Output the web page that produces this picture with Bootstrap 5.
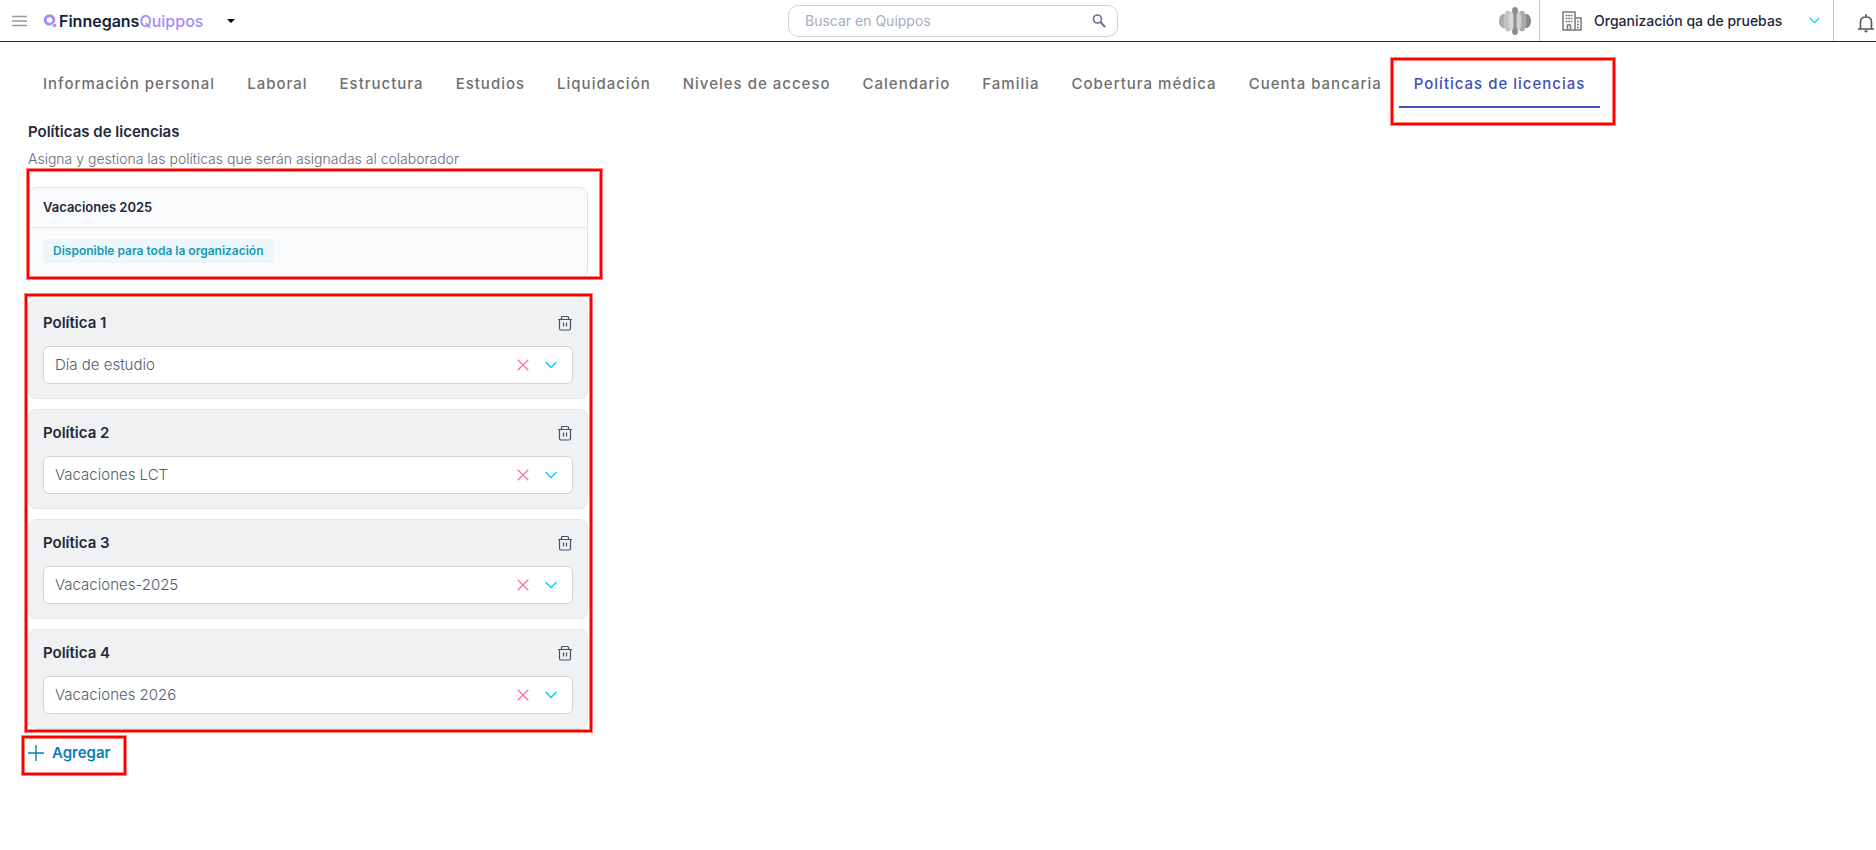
<!DOCTYPE html>
<html lang="es">
<head>
<meta charset="utf-8">
<meta name="viewport" content="width=device-width, initial-scale=1">
<title>Finnegans Quippos</title>
<link href="https://cdn.jsdelivr.net/npm/bootstrap@5.3.0/dist/css/bootstrap.min.css" rel="stylesheet">
<style>
body{font-family:Inter,"Open Sans",sans-serif;font-size:14px;line-height:20px;color:#1e293b;background:#fff;overflow-x:hidden}
svg{display:block;flex:none}
.plain{border:0;background:none;padding:0;color:inherit}
.topbar{height:42px;border-bottom:1px solid #1e2430}
.side{flex:1 1 0}
.brand{font:600 16px/20px Inter,sans-serif;color:#14203f;text-decoration:none}
.brand span{font-weight:500;color:#a98bf5}
.searchbox{width:330px;height:32px;margin-left:30px;border:1px solid #cdd2e0;border-radius:10px;padding:0 11px 0 16px}
.searchbox input,.picker select{border:0;padding:0;background:none;box-shadow:none!important;min-width:0}
.searchbox input{font-size:14px;line-height:20px;color:#475569}
.searchbox input::placeholder{color:#a3aec2}
.org{border:solid #c8c8c8;border-width:0 1px;width:295px;padding:0 13px 0 22px;color:#1e293b}
.org span{font-size:14px;font-weight:500}
.tabs{padding:24px 28px 0;gap:2px}
.tabs a{position:relative;white-space:nowrap;padding:8px 15px 12px;line-height:20px;font-size:15px;font-weight:500;letter-spacing:1px;color:#707070;text-decoration:none;border-bottom:2px solid transparent}
.tabs a.active{color:#3f51b5;border-color:#3f51b5}
.main{max-width:616px;padding:14px 28px}
h1{font-size:15px;line-height:20px;font-weight:600;margin:0 0 7px}
.intro{font-size:14px;line-height:20px;font-weight:300;color:#626a76;margin-bottom:18px}
.mark-box{position:absolute;border:2px solid red;box-shadow:0 0 0 1px #ff8080,inset 0 0 0 1px #ff8080;pointer-events:none}
.m-tab{inset:-8px -15px -19px -8px}
.m-default{inset:-19px -15px -2px -2px}
.m-list{inset:-5px -4px -3px -3px}
.m-add{inset:-7px -15px -12px -6px}
.default-card{border:1px solid #e1e3e6;border-radius:8px;background:#fafbfd;margin-bottom:21px}
.default-card h2{font-size:13px;line-height:20px;font-weight:600;margin:0;padding:9px 14px 10px;border-bottom:1px solid #e1e3e6}
.default-card div{padding:11px 14px 14px}
.tag{display:inline-block;background:#edf6f8;color:#189ab8;border-radius:4px;font-size:12px;font-weight:600;line-height:24px;padding:0 10px;vertical-align:top}
.policies{gap:10px}
.policy{border:1px solid #e4e6ea;border-radius:8px;background:#f0f1f3;padding:13px 14px 14px}
.policy-head{margin-bottom:13px}
.policy label{font-size:15px;line-height:20px;font-weight:600}
.picker{height:38px;border:1px solid #ced4da;border-radius:6px;background:#fff;padding:0 15px 0 11px}
.picker select{font-size:15px;line-height:20px;color:#565c66;font-weight:300}
.add{color:#0b7dbb;font-size:15px;font-weight:600;line-height:20px;margin-top:14px}
</style>
</head>
<body>
<svg class="d-none" aria-hidden="true">
<symbol id="trash" viewBox="0 0 16 16"><path d="M1 4.500h14M4.500 4V2.500q0-1 1-1h5q1 0 1 1V4M2.500 5v8.500q0 1.500 1.500 1.500h8q1.500 0 1.500-1.500V5M6.500 7.500v4M9.500 7.500v4" fill="none" stroke="#475069" stroke-width="1.200"/></symbol>
<symbol id="cross" viewBox="0 0 12 12"><path d="M.7.7l10.600 10.600M11.300.7L.7 11.300" fill="none" stroke="#fb7196" stroke-width="1.300"/></symbol>
<symbol id="chev" viewBox="0 0 12 8"><path d="M.5 1L6 6.500 11.500 1" fill="none" stroke="#12cbf8" stroke-width="1.500"/></symbol>
</svg>
<header class="topbar d-flex align-items-center">
<div class="side d-flex align-items-center">
<button class="plain ms-2 ps-1" aria-label="Menú"><svg width="15" height="12" viewBox="0 0 15 12"><path d="M0 1.500h15M0 6h15M0 10.500h15" stroke="#999" stroke-width="1.500"/></svg></button>
<a class="brand d-flex align-items-center ms-3" href="#"><svg width="16" height="16" viewBox="0 0 16 16"><circle cx="6.500" cy="7" r="4.300" fill="none" stroke="#a98bf5" stroke-width="3"/><circle cx="11.500" cy="12.500" r="2.200" fill="#a98bf5" stroke="#fff" stroke-width=".8"/></svg>Finnegans<span>Quippos</span></a>
<button class="plain ms-4" aria-label="Productos"><svg width="8" height="4" viewBox="0 0 8 4"><path d="M0 0h8L4 4z"/></svg></button>
</div>
<div class="searchbox d-flex align-items-center"><input class="form-control" type="search" placeholder="Buscar en Quippos" aria-label="Buscar en Quippos"><svg width="14" height="14" viewBox="0 0 14 14" fill="none" stroke="#65718b"><circle cx="5.500" cy="5" r="4" stroke-width="1.600"/><path d="M8.500 8l4.500 5" stroke-width="2"/></svg></div>
<div class="side d-flex align-items-center justify-content-end align-self-stretch">
<svg class="me-2" width="32" height="28" viewBox="0 0 32 28"><ellipse cx="4.500" cy="14" rx="4.500" ry="7" fill="#aaa"/><ellipse cx="27.500" cy="14" rx="4.500" ry="7" fill="#888"/><ellipse cx="9" cy="14" rx="4.500" ry="10.500" fill="#c2c2c2"/><ellipse cx="23" cy="14" rx="4.500" ry="10.500" fill="#aaa"/><ellipse cx="12.500" cy="14" rx="3" ry="10" fill="#d8d8d8"/><ellipse cx="19.500" cy="14" rx="3" ry="10" fill="#d0d0d0"/><path d="M16 0q3 0 3 4l-1.500 4v12l1.500 4q0 4-3 4t-3-4l1.500-4V8L13 4q0-4 3-4" fill="#8d8d8d"/></svg>
<button class="plain org d-flex align-items-center align-self-stretch"><svg width="20" height="20" viewBox="0 0 20 20" fill="none" stroke="#777" stroke-width="1.500"><path d="M1 19V1h12v18zM13 7h6v12H1M5.500 19v-5h3v5"/><path d="M3.500 4.500h7M3.500 7.500h7M3.500 10.500h7M15 10.500h2M15 13.500h2M15 16.500h2" stroke-dasharray="2 .7"/></svg><span class="ms-2 ps-1 me-auto">Organización qa de pruebas</span><svg width="11" height="7"><use href="#chev"/></svg></button>
<button class="plain ms-4" aria-label="Notificaciones"><svg class="mt-1" width="18" height="20" viewBox="0 0 18 20"><path d="M0 16h16M2.500 15.500V9q0-5 5.500-5t5.500 5v6.500M8 1v3" fill="none" stroke="#555" stroke-width="1.600"/><path d="M6 17.500h4q-.5 2-2 2t-2-2" fill="#555"/></svg></button>
</div>
</header>
<nav class="tabs d-flex" aria-label="Secciones">
<a href="#">Información personal</a><a href="#">Laboral</a><a href="#">Estructura</a><a href="#">Estudios</a><a href="#">Liquidación</a><a href="#">Niveles de acceso</a><a href="#">Calendario</a><a href="#">Familia</a><a href="#">Cobertura médica</a><a href="#">Cuenta bancaria</a><a class="active" href="#" aria-current="page">Políticas de licencias<i class="mark-box m-tab"></i></a>
</nav>
<main class="main">
<h1>Políticas de licencias</h1>
<p class="intro">Asigna y gestiona las políticas que serán asignadas al colaborador</p>
<section class="default-card position-relative"><h2>Vacaciones 2025</h2><div><span class="tag">Disponible para toda la organización</span></div><i class="mark-box m-default"></i></section>
<section class="position-relative d-grid policies">
<div class="policy"><div class="policy-head d-flex justify-content-between align-items-center"><label for="p1">Política 1</label><button class="plain" aria-label="Eliminar"><svg width="16" height="16"><use href="#trash"/></svg></button></div><div class="picker d-flex align-items-center"><select id="p1" class="form-select"><option>Día de estudio</option></select><button class="plain" aria-label="Quitar"><svg width="12" height="12"><use href="#cross"/></svg></button><svg class="ms-3" width="12" height="8"><use href="#chev"/></svg></div></div>
<div class="policy"><div class="policy-head d-flex justify-content-between align-items-center"><label for="p2">Política 2</label><button class="plain" aria-label="Eliminar"><svg width="16" height="16"><use href="#trash"/></svg></button></div><div class="picker d-flex align-items-center"><select id="p2" class="form-select"><option>Vacaciones LCT</option></select><button class="plain" aria-label="Quitar"><svg width="12" height="12"><use href="#cross"/></svg></button><svg class="ms-3" width="12" height="8"><use href="#chev"/></svg></div></div>
<div class="policy"><div class="policy-head d-flex justify-content-between align-items-center"><label for="p3">Política 3</label><button class="plain" aria-label="Eliminar"><svg width="16" height="16"><use href="#trash"/></svg></button></div><div class="picker d-flex align-items-center"><select id="p3" class="form-select"><option>Vacaciones-2025</option></select><button class="plain" aria-label="Quitar"><svg width="12" height="12"><use href="#cross"/></svg></button><svg class="ms-3" width="12" height="8"><use href="#chev"/></svg></div></div>
<div class="policy"><div class="policy-head d-flex justify-content-between align-items-center"><label for="p4">Política 4</label><button class="plain" aria-label="Eliminar"><svg width="16" height="16"><use href="#trash"/></svg></button></div><div class="picker d-flex align-items-center"><select id="p4" class="form-select"><option>Vacaciones 2026</option></select><button class="plain" aria-label="Quitar"><svg width="12" height="12"><use href="#cross"/></svg></button><svg class="ms-3" width="12" height="8"><use href="#chev"/></svg></div></div>
<i class="mark-box m-list"></i>
</section>
<button class="plain add position-relative d-inline-flex align-items-center"><svg class="me-2" width="16" height="16" viewBox="0 0 16 16"><path d="M8 0v16M0 8h16" stroke="#0b7dbb" stroke-width="1.400"/></svg>Agregar<i class="mark-box m-add"></i></button>
</main>
<script src="https://cdn.jsdelivr.net/npm/bootstrap@5.3.0/dist/js/bootstrap.bundle.min.js"></script>
</body>
</html>
